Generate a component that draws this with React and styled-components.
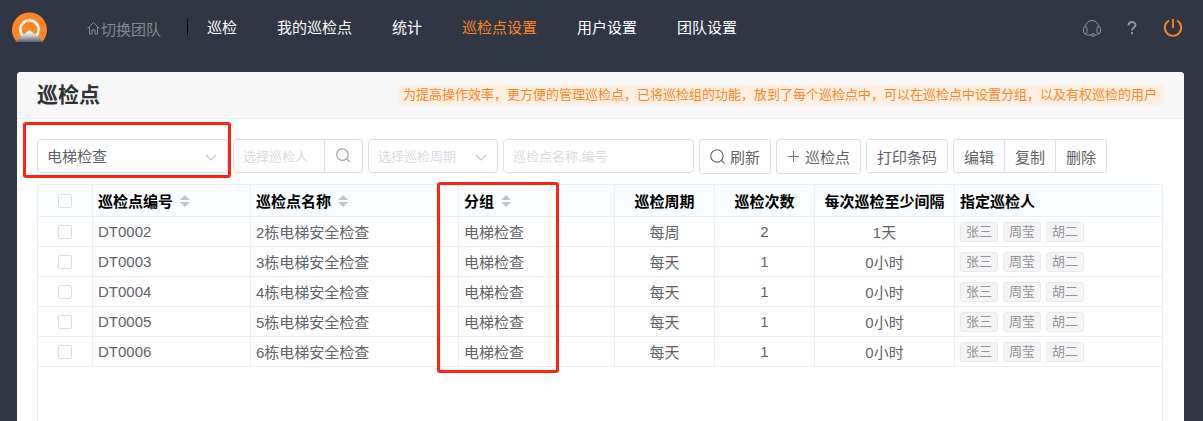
import React from 'react';
import styled, { createGlobalStyle, css } from 'styled-components';

const GlobalStyle = createGlobalStyle`
    * {
        box-sizing: border-box;
    }

    body {
        margin: 0;
        background: #303643;
        color: #606266;
        font-family: "Liberation Sans", "Noto Sans CJK SC", sans-serif;
        font-size: 15px;
    }

    button, input, select {
        margin: 0;
        font-family: inherit;
    }
`;

const Page = styled.div`
    display: flex;
    flex-direction: column;
    min-height: 100vh;
`;

const Header = styled.header`
    display: flex;
    align-items: flex-start;
    height: 72px;
    padding: 12px 20px 0 12px;
`;

const Logo = styled.svg`
    flex: none;
    width: 35px;
    height: 30px;
`;

const SwitchTeam = styled.a`
    display: flex;
    align-items: center;
    gap: 1px;
    height: 32px;
    margin-left: 40px;
    color: #85888f;
    text-decoration: none;
    white-space: nowrap;
`;

const Nav = styled.nav`
    display: flex;
    align-items: center;
    gap: 40px;
    height: 28px;
    margin-left: 26px;
    padding-left: 20px;
    background: linear-gradient(#000, #000) 0 7px / 1px 16px no-repeat;
`;

const NavLink = styled.a`
    color: ${({ $active }) => ($active ? '#ff8524' : '#fff')};
    text-decoration: none;
    white-space: nowrap;
`;

const HeaderTools = styled.div`
    display: flex;
    align-items: center;
    gap: 26px;
    height: 32px;
    margin-left: auto;
`;

const ToolButton = styled.button`
    display: flex;
    padding: 0;
    border: 0;
    background: none;
    color: ${({ $accent }) => ($accent ? '#ff8524' : '#8f9298')};
    cursor: pointer;
`;

const Card = styled.main`
    display: flex;
    flex: 1;
    flex-direction: column;
    margin: 0 19px 0 17px;
    border-radius: 4px 4px 0 0;
    background: #fff;
`;

const CardHeader = styled.div`
    display: flex;
    align-items: center;
    justify-content: space-between;
    height: 47px;
    padding: 0 20px;
    border-bottom: 1px solid #ebeef5;
    border-radius: 4px 4px 0 0;
    background: #f7f7f7;
`;

const Title = styled.h1`
    margin: 0;
    color: #303133;
    font-size: 21px;
    line-height: 32px;
`;

const Notice = styled.p`
    margin: 0;
    padding: 0 7px 0 5px;
    border-radius: 3px;
    background: #ffefe0;
    color: #ff8524;
    font-size: 13px;
    line-height: 20px;
    white-space: nowrap;
`;

const CardBody = styled.div`
    display: flex;
    flex: 1;
    flex-direction: column;
    gap: 10px;
    padding: 20px 21px 0 20px;
`;

const Toolbar = styled.div`
    display: flex;
    align-items: flex-start;
    gap: 5px;
    height: 35px;
`;

const Mark = styled.div`
    position: absolute;
    z-index: 1;
    border: 3px solid #ff2314;
    border-radius: 3px;
    pointer-events: none;
`;

const FieldMark = styled(Mark)`
    inset: -17px -3px -5px -14px;
`;

const ColumnMark = styled(Mark)`
    top: -3px;
    left: 399px;
    width: 122px;
    height: 191px;
`;

const Field = styled.div`
    position: relative;
    display: flex;
    width: ${({ $wide }) => ($wide ? 191 : 130)}px;
    height: 34px;
`;

const control = css`
    flex: 1;
    min-width: 0;
    padding: 0 9px;
    border: 1px solid #dcdfe6;
    border-radius: 4px;
    background: #fff;
    outline: none;
    font-size: 13px;
`;

const Select = styled.select`
    ${control}
    appearance: none;
    color: ${({ $empty }) => ($empty ? '#d8dbe2' : '#606266')};
    font-size: ${({ $empty }) => ($empty ? 13 : 15)}px;
`;

const Input = styled.input`
    ${control}
    border-radius: ${({ $joined }) => ($joined ? '4px 0 0 4px' : '4px')};

    &::placeholder {
        color: #d8dbe2;
        opacity: 1;
    }
`;

const Chevron = styled.svg`
    position: absolute;
    top: 12px;
    right: 11px;
    width: 12px;
    height: 12px;
    pointer-events: none;
`;

const SearchButton = styled.button`
    display: flex;
    align-items: center;
    justify-content: center;
    width: 38px;
    padding: 0 2px 2px 0;
    border: 1px solid #dcdfe6;
    border-left: 0;
    border-radius: 0 4px 4px 0;
    background: #fff;
    color: #909399;
`;

const Button = styled.button`
    display: flex;
    align-items: center;
    gap: 5px;
    height: ${({ $icon }) => ($icon ? 35 : 34)}px;
    padding: 0 10px;
    border: 1px solid #dcdfe6;
    border-radius: 3px;
    background: #fff;
    color: #606266;
    font-size: 15px;
    white-space: nowrap;
    cursor: pointer;
`;

const ButtonGroup = styled.div`
    display: flex;

    ${Button} {
        border-radius: 0;
    }

    ${Button} + ${Button} {
        margin-left: -1px;
    }

    ${Button}:first-child {
        border-radius: 3px 0 0 3px;
    }

    ${Button}:last-child {
        border-radius: 0 3px 3px 0;
    }
`;

const TableBox = styled.div`
    position: relative;
    flex: 1;
    border: 1px solid #ebeef5;
    border-bottom: 0;
`;

const Table = styled.table`
    width: 100%;
    table-layout: fixed;
    border-collapse: separate;
    border-spacing: 0;
`;

const cell = css`
    padding: 0 5px;
    border-right: 1px solid #ebeef5;
    border-bottom: 1px solid #ebeef5;
    text-align: ${({ $center }) => ($center ? 'center' : 'left')};
    white-space: nowrap;

    &:last-child {
        border-right: 0;
    }
`;

const Th = styled.th`
    ${cell}
    height: 32px;
    background: #fafdff;
    color: #000;
`;

const Td = styled.td`
    ${cell}
    height: 30px;
`;

const HeadLabel = styled.span`
    display: inline-flex;
    align-items: center;
    gap: 7px;
`;

const Checkbox = styled.input`
    display: block;
    width: 14px;
    height: 14px;
    margin: 0 auto;
    appearance: none;
    border: 1px solid #dcdfe6;
    border-radius: 2px;
    background: #fff;

    &:checked {
        background: #ff8524;
    }
`;

const Tags = styled.div`
    display: flex;
    gap: 5px;
`;

const Tag = styled.span`
    height: 20px;
    padding: 0 5px;
    border: 1px solid #e9e9eb;
    border-radius: 3px;
    background: #f4f4f5;
    color: #909399;
    font-size: 13px;
    line-height: 18px;
`;

const links = ['巡检', '我的巡检点', '统计', '巡检点设置', '用户设置', '团队设置'];

const columns = [
    { label: '巡检点编号', width: 158, sortable: true },
    { label: '巡检点名称', width: 208, sortable: true },
    { label: '分组', width: 156, sortable: true },
    { label: '巡检周期', width: 100, center: true },
    { label: '巡检次数', width: 100, center: true },
    { label: '每次巡检至少间隔', width: 140, center: true },
    { label: '指定巡检人' },
];

const rows = [
    { code: 'DT0002', name: '2栋电梯安全检查', cycle: '每周', times: 2, interval: '1天' },
    { code: 'DT0003', name: '3栋电梯安全检查', cycle: '每天', times: 1, interval: '0小时' },
    { code: 'DT0004', name: '4栋电梯安全检查', cycle: '每天', times: 1, interval: '0小时' },
    { code: 'DT0005', name: '5栋电梯安全检查', cycle: '每天', times: 1, interval: '0小时' },
    { code: 'DT0006', name: '6栋电梯安全检查', cycle: '每天', times: 1, interval: '0小时' },
];

const people = ['张三', '周莹', '胡二'];

const SearchIcon = ({ size }) => (
    <svg width={size} height={size} viewBox="0 0 16 16" fill="none" stroke="currentColor" strokeWidth="1.2">
        <circle cx="7.4" cy="7.4" r="6.6" />
        <path d="M12 12l3.6 3.6" />
    </svg>
);

const ChevronIcon = () => (
    <Chevron viewBox="0 0 12 12" fill="none" stroke="#c0c4cc" strokeWidth="1.2">
        <path d="M1 4l5 5 5-5" />
    </Chevron>
);

const SortIcon = () => (
    <svg width="10" height="12" viewBox="0 0 10 12" fill="#c0c4cc">
        <path d="M0 5l5-5 5 5zM0 7h10l-5 5z" />
    </svg>
);

const App = () => {
    return (
        <Page>
            <GlobalStyle />
            <Header>
                <Logo viewBox="0 0 35 30">
                    <defs>
                        <linearGradient id="hill" x1="0" y1="0" x2="0" y2="1">
                            <stop offset="0" stopColor="#fff" />
                            <stop offset="0.4" stopColor="#d5d6d8" />
                            <stop offset="1" stopColor="#5c616b" />
                        </linearGradient>
                    </defs>
                    <path d="M4.8 30a17.5 17.5 0 1 1 25.4 0z" fill="#ff8524" />
                    <circle cx="17.5" cy="17.5" r="9.2" fill="none" stroke="#fff" strokeWidth="2.6" />
                    <path d="M17.5 18l4 3 10.5 9h-29l10.5-9z" fill="url(#hill)" />
                </Logo>
                <SwitchTeam href="#team">
                    <svg width="13" height="14" viewBox="0 0 13 14" fill="none" stroke="currentColor">
                        <path d="M0.5 7.5l6-6 6 6M2.5 6v7h2.5v-4h3v4h2.5v-7" />
                    </svg>
                    切换团队
                </SwitchTeam>
                <Nav>
                    {links.map((link) => (
                        <NavLink key={link} href="#nav" $active={link === '巡检点设置'}>{link}</NavLink>
                    ))}
                </Nav>
                <HeaderTools>
                    <ToolButton aria-label="客服">
                        <svg width="18" height="18" viewBox="0 0 18 18" fill="none" stroke="currentColor">
                            <path d="M2.5 8a6.5 6.5 0 0 1 13 0" />
                            <rect x="0.5" y="8" width="3.5" height="6.5" rx="1.5" />
                            <rect x="14" y="8" width="3.5" height="6.5" rx="1.5" />
                            <path d="M2.5 14.500c0 1.300 1 1.500 2 1.500h4M15.500 14.500c0 1-1 1.500-4 1.500" />
                            <circle cx="10" cy="16" r="1.4" />
                        </svg>
                    </ToolButton>
                    <ToolButton aria-label="帮助">
                        <svg width="10" height="14" viewBox="0 0 10 14" fill="none" stroke="currentColor" strokeWidth="2">
                            <path d="M1.500 4.500c0-4.500 7-4.500 7-0.500 0 2.500-3.500 2.500-3.500 5.500M5 11v2.200" />
                        </svg>
                    </ToolButton>
                    <ToolButton $accent aria-label="退出">
                        <svg width="20" height="20" viewBox="0 0 20 20" fill="none" stroke="currentColor" strokeWidth="1.8">
                            <path d="M6 2.500a8.200 8.200 0 1 0 8 0M10 1v9" />
                        </svg>
                    </ToolButton>
                </HeaderTools>
            </Header>

            <Card>
                <CardHeader>
                    <Title>巡检点</Title>
                    <Notice>为提高操作效率，更方便的管理巡检点，已将巡检组的功能，放到了每个巡检点中，可以在巡检点中设置分组，以及有权巡检的用户</Notice>
                </CardHeader>
                <CardBody>
                    <Toolbar>
                        <Field $wide>
                            <Select aria-label="分组">
                                <option>电梯检查</option>
                            </Select>
                            <ChevronIcon />
                            <FieldMark />
                        </Field>
                        <Field>
                            <Input $joined aria-label="巡检人" placeholder="选择巡检人" />
                            <SearchButton aria-label="搜索"><SearchIcon size={14} /></SearchButton>
                        </Field>
                        <Field>
                            <Select $empty aria-label="巡检周期">
                                <option>选择巡检周期</option>
                            </Select>
                            <ChevronIcon />
                        </Field>
                        <Field $wide>
                            <Input aria-label="巡检点名称,编号" placeholder="巡检点名称,编号" />
                        </Field>
                        <Button $icon><SearchIcon size={15} />刷新</Button>
                        <Button $icon>
                            <svg width="13" height="13" viewBox="0 0 13 13" stroke="#85705f">
                                <path d="M1 6.5h11M6.5 1v11" />
                            </svg>
                            巡检点
                        </Button>
                        <Button>打印条码</Button>
                        <ButtonGroup>
                            <Button>编辑</Button>
                            <Button>复制</Button>
                            <Button>删除</Button>
                        </ButtonGroup>
                    </Toolbar>

                    <TableBox>
                        <Table>
                            <colgroup>
                                <col width="55" />
                                {columns.map(({ label, width }) => <col key={label} width={width} />)}
                            </colgroup>
                            <thead>
                                <tr>
                                    <Th><Checkbox type="checkbox" aria-label="全选" /></Th>
                                    {columns.map(({ label, sortable, center }) => (
                                        <Th key={label} $center={center}>
                                            <HeadLabel>{label}{sortable && <SortIcon />}</HeadLabel>
                                        </Th>
                                    ))}
                                </tr>
                            </thead>
                            <tbody>
                                {rows.map((row) => (
                                    <tr key={row.code}>
                                        <Td><Checkbox type="checkbox" aria-label={row.code} /></Td>
                                        <Td>{row.code}</Td>
                                        <Td>{row.name}</Td>
                                        <Td>电梯检查</Td>
                                        <Td $center>{row.cycle}</Td>
                                        <Td $center>{row.times}</Td>
                                        <Td $center>{row.interval}</Td>
                                        <Td>
                                            <Tags>
                                                {people.map((person) => <Tag key={person}>{person}</Tag>)}
                                            </Tags>
                                        </Td>
                                    </tr>
                                ))}
                            </tbody>
                        </Table>
                        <ColumnMark />
                    </TableBox>
                </CardBody>
            </Card>
        </Page>
    );
};

export default App;
